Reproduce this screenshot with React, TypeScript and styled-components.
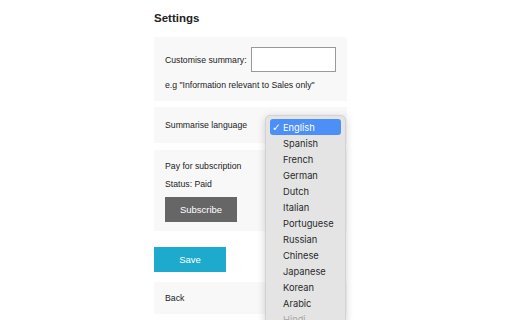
import * as React from 'react';
import styled, { createGlobalStyle } from 'styled-components';

const GlobalStyle = createGlobalStyle`
  html, body {
    margin: 0;
    padding: 0;
    background: #ffffff;
    overflow: hidden;
    height: 320px;
  }
  body {
    font-family: "Liberation Sans", Arial, sans-serif;
    color: #222222;
  }
`

const Page = styled.div`
  width: 193px;
  padding: 10px 0 0 154px;
`
const Title = styled.h1`
  font-size: 11.5px;
  font-weight: bold;
  margin: 0 0 11px;
  line-height: 16px;
`
const Card = styled.div<{ $pad?: string; $gap?: number; $plain?: boolean }>`
  background: ${p => (p.$plain ? 'transparent' : '#f8f8f8')};
  padding: ${p => p.$pad || '10px 11px'};
  margin-bottom: ${p => (p.$gap ?? 7)}px;
  display: flex;
  flex-direction: column;
  font-size: 8.7px;
`
const SelectCard = styled(Card)`
  position: relative;
  z-index: 2;
`
const Row = styled.div`
  display: flex;
  align-items: center;
  gap: 4px;
  white-space: nowrap;
`
const Text = styled.p<{ $top?: number }>`
  margin: ${p => p.$top || 0}px 0 0;
  font-size: 8.7px;
  line-height: 12px;
  white-space: nowrap;
`
const Input = styled.div`
  width: 84px;
  height: 23px;
  border: solid 1px #9a9a9a;
  background: #ffffff;
`
const Button = styled.div<{ $bg: string }>`
  width: 72px;
  height: 25px;
  background: ${p => p.$bg};
  color: #ffffff;
  font-size: 9.5px;
  display: flex;
  align-items: center;
  justify-content: center;
`
const Popup = styled.div`
  position: absolute;
  left: 111px;
  top: 8px;
  width: 81px;
  height: 230px;
  background: #e4e4e4;
  border: solid 1px #d2d2d2;
  border-radius: 5px;
  box-shadow: 0 2px 8px rgba(0, 0, 0, 0.18);
  padding: 3px 4px;
  box-sizing: border-box;
  font-family: Inter, "Noto Sans", sans-serif;
`
const Option = styled.div<{ $active?: boolean; $faded?: boolean }>`
  height: 16px;
  display: flex;
  align-items: center;
  padding-left: 13px;
  border-radius: 3px;
  position: relative;
  font-size: 9.3px;
  color: ${p => (p.$active ? '#ffffff' : p.$faded ? '#a8a8a8' : '#2a2a2a')};
  background: ${p => (p.$active ? '#4c8ff6' : 'transparent')};
`
const Check = styled.span`
  position: absolute;
  left: 2px;
  top: 1px;
  font-size: 10.5px;
  line-height: 14px;
  font-family: "DejaVu Sans", sans-serif;
`

const languages = [
  'English', 'Spanish', 'French', 'German', 'Dutch', 'Italian', 'Portuguese',
  'Russian', 'Chinese', 'Japanese', 'Korean', 'Arabic', 'Hindi'
];

const App: React.FC = () => {
  return (
    <>
      <GlobalStyle />
      <Page>
        <Title>Settings</Title>
        <Card $pad="10px 11px 10px 11px" $gap={6}>
          <Row>
            <span>Customise summary:</span>
            <Input />
          </Row>
          <Text $top={7}>e.g "Information relevant to Sales only"</Text>
        </Card>
        <SelectCard $pad="12px 11px" $gap={7}>
          <Text>Summarise language</Text>
          <Popup>
            {languages.map((lang, i) => (
              <Option key={lang} $active={i === 0} $faded={i === languages.length - 1}>
                {i === 0 && <Check>✓</Check>}
                {lang}
              </Option>
            ))}
          </Popup>
        </SelectCard>
        <Card $pad="10px 11px 9px" $gap={16}>
          <Text>Pay for subscription</Text>
          <Text $top={6}>Status: Paid</Text>
          <Text $top={7} as="div"><Button $bg="#666666">Subscribe</Button></Text>
        </Card>
        <Card $pad="0" $gap={10} $plain>
          <Button $bg="#1eaacd">Save</Button>
        </Card>
        <Card $pad="10px 11px">
          <Text>Back</Text>
        </Card>
      </Page>
    </>
  );
}

export default App;
